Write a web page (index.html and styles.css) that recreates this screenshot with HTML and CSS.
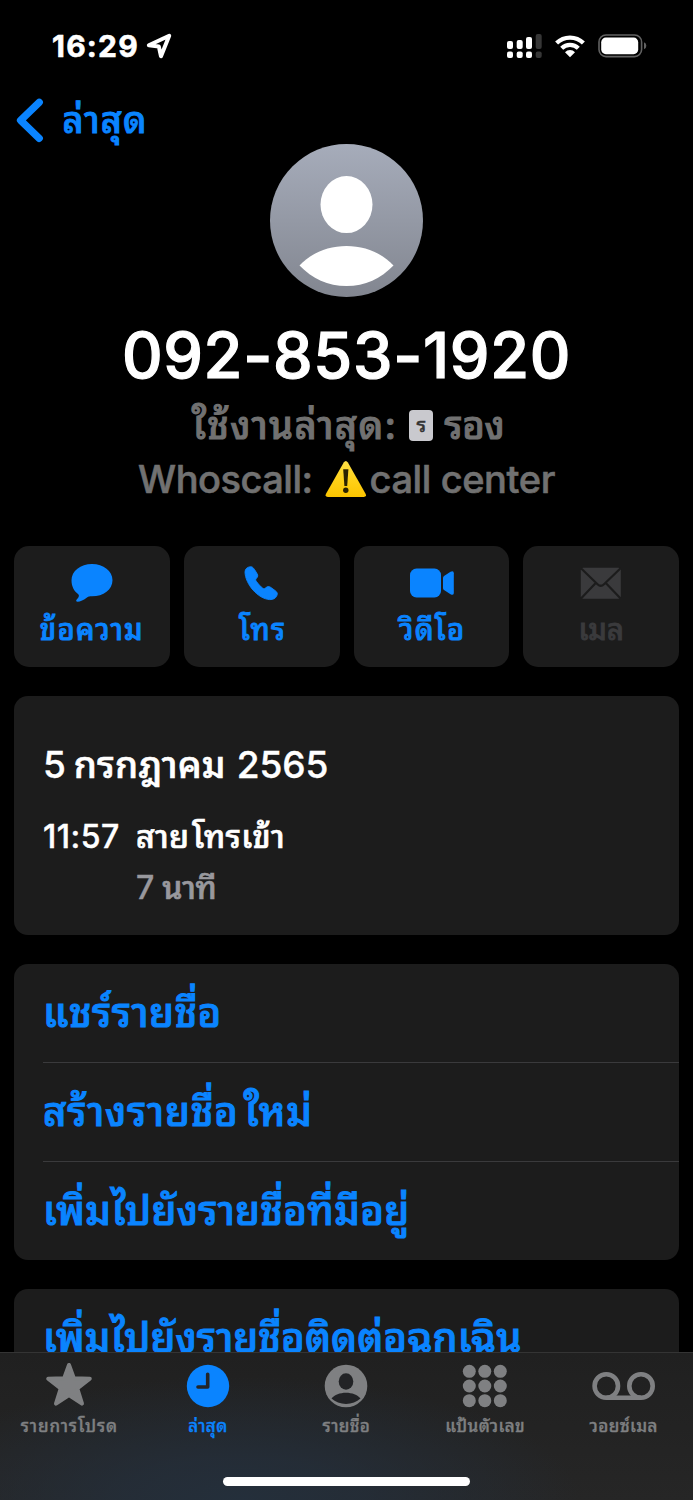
FILE: index.html
```html
<!DOCTYPE html>
<html lang="th">
<head>
<meta charset="utf-8">
<title>ล่าสุด</title>
<link rel="stylesheet" href="styles.css">
</head>
<body>
<div class="screen">
  <header class="status">
    <span class="clock">16:29</span>
    <svg class="locate" width="26" height="26" viewBox="0 0 26 26"><path d="M2.800 12.200 L23.200 2.800 L15 23.200 L12.800 13.400 Z" fill="none" stroke="#fff" stroke-width="4" stroke-linejoin="round"/></svg>
    <svg class="signal" width="35" height="24" viewBox="0 0 35 24">
      <g fill="#fff"><rect x="0" y="7" width="6" height="8" rx="2"/><rect x="9.7" y="6" width="6" height="9" rx="2"/><rect x="19" y="3" width="6" height="12" rx="2"/><rect x="0" y="17.5" width="6" height="6.5" rx="2"/><rect x="9.7" y="17.5" width="6" height="6.5" rx="2"/><rect x="19" y="17.5" width="6" height="6.5" rx="2"/></g>
      <g fill="#363636"><rect x="28.7" y="0" width="6" height="15" rx="2"/><rect x="28.7" y="17.5" width="6" height="6.5" rx="2"/></g>
    </svg>
    <svg class="wifi" width="30" height="23" viewBox="0 0 30 23"><g fill="none" stroke="#fff" stroke-width="4.2"><path d="M1.6 8.1 A19 19 0 0 1 28.4 8.1"/><path d="M6.7 13.3 A11.7 11.7 0 0 1 23.3 13.3"/></g><path d="M10 17.2 A7 7 0 0 1 20 17.2 L15 22.3 Z" fill="#fff"/></svg>
    <svg class="battery" width="49" height="24" viewBox="0 0 49 24"><rect x="1" y="1" width="42.6" height="21.6" rx="7" fill="none" stroke="#626262" stroke-width="1.6"/><rect x="3.2" y="3.6" width="37" height="16.6" rx="4.6" fill="#fff"/><path d="M46 8.3 Q48.3 9 48.3 11.8 Q48.3 14.6 46 15.3 Z" fill="#626262"/></svg>
  </header>

  <main class="content">
    <nav class="back">
      <svg width="28" height="46" viewBox="0 0 28 46"><path d="M23.2 5.3 L4.6 23.300 L23.2 41.300" fill="none" stroke="#0a84ff" stroke-width="7.400" stroke-linecap="round" stroke-linejoin="round"/></svg>
      <span class="back-label">ล่าสุด</span>
    </nav>
    <svg class="avatar" width="153" height="153" viewBox="0 0 153 153">
      <defs><linearGradient id="avatar-fill" x1="0" y1="0" x2="0" y2="1"><stop offset="0" stop-color="#a6acba"/><stop offset="1" stop-color="#828690"/></linearGradient></defs>
      <circle cx="76.5" cy="76.5" r="76.5" fill="url(#avatar-fill)"/>
      <ellipse cx="76.5" cy="60.6" rx="26" ry="28.5" fill="#fff"/>
      <path d="M29.5 121.5 C41 109 58 102 76.5 102 C95 102 112 109 123.5 121.5 C111 134.500 95 142 76.500 142 C58 142 42 134.500 29.500 121.500 Z" fill="#fff"/>
    </svg>
    <h1 class="number">092-853-1920</h1>
    <p class="sub"><span class="t-used">ใช้งานล่าสุด:</span><span class="sim">ร</span><span class="t-rong">รอง</span></p>
    <p class="sub"><span class="t-who">Whoscall:</span><svg class="warning" width="42" height="38" viewBox="0 0 42 38"><defs><linearGradient id="warn-fill" x1="0" y1="0" x2="0" y2="1"><stop offset="0" stop-color="#fde047"/><stop offset=".5" stop-color="#ffd21a"/><stop offset="1" stop-color="#fbc400"/></linearGradient></defs><path d="M18.700 2.600 Q20.800 -.6 22.900 2.600 L40.700 34 Q41.800 37 38.600 37 H3 Q-.2 37 .9 34 Z" fill="url(#warn-fill)"/><path d="M18.200 9.300 H23.400 L22.200 26 H19.400 Z" fill="#2b2200"/><circle cx="20.800" cy="30.300" r="2.700" fill="#2b2200"/></svg><span class="t-call">call center</span></p>

    <section class="actions">
      <div class="action"><svg width="46" height="44" viewBox="0 0 46 44"><path d="M23 4 C34.500 4 43.500 11 43.500 20.200 C43.500 29.500 34.500 36.300 23 36.300 C20.500 36.300 19.500 36.300 18 37.500 C15 40 11 41.800 8.600 41.800 C7 41.800 6.800 40.600 7.700 39.600 C9.300 37.800 10.600 35.700 9.500 34.400 C5 31.300 2.500 26.500 2.500 20.300 C2.500 11 11.500 4 23 4 Z" fill="#0a84ff"/></svg><span class="a-msg">ข้อความ</span></div>
      <div class="action"><svg width="46" height="44" viewBox="0 0 46 44"><path d="M6 12 C6 8.800 8.500 7 11.500 6.700 C13 6.500 14.200 7.600 15.500 9.500 L18 13.600 C19.200 15.500 18.900 16.700 17.500 18.200 C16.300 19.500 16.500 20.200 17.500 21.600 C19.200 24.200 21.200 26.200 23.500 28 C25 29.100 25.800 28.800 27 27.600 C28.600 26.300 29.800 26.200 31.600 27.300 L36.300 30.700 C38.300 32.200 38.700 33.500 37.900 35.500 C36.700 38.500 34 39.700 30.800 39.600 C19 39 6.200 24 6 12 Z" fill="#0a84ff" stroke="#0a84ff" stroke-width=".9" stroke-linejoin="round"/></svg><span class="a-call">โทร</span></div>
      <div class="action"><svg width="46" height="44" viewBox="0 0 46 44"><rect x="2" y="8.500" width="31" height="29" rx="6.500" fill="#0a84ff"/><path d="M35 18 Q35 16.700 36 15.900 L42.500 11.800 Q45.800 10.300 45.800 13.300 V33 Q45.800 35.900 42.500 34.200 L36 30 Q35 29.200 35 27.900 Z" fill="#0a84ff"/></svg><span class="a-vid">วิดีโอ</span></div>
      <div class="action off"><svg width="46" height="44" viewBox="0 0 46 44"><rect x="2.800" y="7.700" width="40" height="31" rx="2.500" fill="#3a3a3c"/><path d="M3 8.200 L19.500 24.200 Q22.800 27.300 26 24.200 L42.600 8.200 M3 38.500 L17.500 23.200 M42.600 38.500 L28 23.200" fill="none" stroke="#1c1c1c" stroke-width="2.200"/></svg><span class="a-mail">เมล</span></div>
    </section>

    <section class="card history">
      <h2 class="date">5 <span class="t-month">กรกฎาคม</span> 2565</h2>
      <div class="entry"><span class="time">11:57</span><span class="t-kind">สาย<span class="in">โทรเข้า</span></span></div>
      <div class="entry muted"><span class="time"></span><span class="t-dur">7 <span class="t-min">นาที</span></span></div>
    </section>

    <section class="card list">
      <div class="row"><span class="r1">แชร์รายชื่อ</span></div>
      <div class="row"><span class="r2">สร้างรายชื่อ<span class="new">ใหม่</span></span></div>
      <div class="row"><span class="r3">เพิ่มไปยังรายชื่อที่มีอยู่</span></div>
    </section>
    <section class="card list">
      <div class="row"><span class="r4">เพิ่มไปยังรายชื่อติดต่อฉุกเฉิน</span></div>
    </section>
  </main>

  <footer class="tabs">
    <div class="tab-row">
      <div class="tab"><svg width="64" height="48" viewBox="0 0 64 48"><path d="M32 5 L36.800 18.200 L52.800 18.700 L40.300 28.500 L45 43.700 L32 35 L19 43.700 L23.700 28.500 L11.200 18.700 L27.200 18.200 Z" fill="#7f8082" stroke="#7f8082" stroke-width="4" stroke-linejoin="round"/></svg><span class="b1">รายการโปรด</span></div>
      <div class="tab on"><svg width="64" height="48" viewBox="0 0 64 48"><circle cx="32" cy="26" r="21.200" fill="#0a84ff"/><path d="M31.700 14.300 V27 H22" fill="none" stroke="#222529" stroke-width="3.600" stroke-linecap="round" stroke-linejoin="round"/></svg><span class="b2">ล่าสุด</span></div>
      <div class="tab"><svg width="64" height="48" viewBox="0 0 64 48"><circle cx="32" cy="26" r="21.300" fill="#7f8082"/><ellipse cx="32" cy="21.500" rx="7.300" ry="8.200" fill="#222326"/><path d="M17.500 38.500 C20.500 34.800 26 32.700 32 32.700 C38 32.700 43.500 34.800 46.500 38.500 C42.800 42 37.500 43.900 32 43.900 C26.500 43.900 21.200 42 17.500 38.500 Z" fill="#222326"/></svg><span class="b3">รายชื่อ</span></div>
      <div class="tab"><svg width="64" height="48" viewBox="0 0 64 48"><g fill="#7f8082"><circle cx="16.300" cy="11.300" r="6.500"/><circle cx="31.800" cy="11.300" r="6.500"/><circle cx="47.300" cy="11.300" r="6.500"/><circle cx="16.300" cy="26" r="6.500"/><circle cx="31.800" cy="26" r="6.500"/><circle cx="47.300" cy="26" r="6.500"/><circle cx="16.300" cy="40.700" r="6.500"/><circle cx="31.800" cy="40.700" r="6.500"/><circle cx="47.300" cy="40.700" r="6.500"/></g></svg><span class="b4">แป้นตัวเลข</span></div>
      <div class="tab"><svg width="64" height="48" viewBox="0 0 64 48"><g fill="none" stroke="#7f8082" stroke-width="4.600"><circle cx="14.300" cy="26" r="11.700"/><circle cx="49" cy="26" r="11.700"/><path d="M14.300 37.700 H49"/></g></svg><span class="b5">วอยซ์เมล</span></div>
    </div>
    <div class="home"></div>
  </footer>
</div>
</body>
</html>
```

FILE: styles.css
```css
* { box-sizing: border-box; margin: 0; padding: 0; }
body { background: #000; }
svg { display: block; flex: none; }
.screen {
  width: 693px; height: 1500px; display: flex; flex-direction: column;
  background: #000; color: #fff; overflow: hidden;
  font-family: Inter, "Noto Sans Thai Looped", "Noto Sans Thai", Sarabun, Loma, sans-serif;
  font-weight: 500; white-space: nowrap;
}
.status { height: 92px; display: flex; align-items: center; padding-left: 52px; flex: none; }
.clock { font-weight: 700; font-size: 30px; line-height: 36px; width: 94px; letter-spacing: 1.2px; -webkit-text-stroke: .6px; }
.signal { margin-left: 335px; }
.wifi { margin-left: 13px; }
.battery { margin-left: 13px; }
.content { flex: 1; min-height: 0; overflow: hidden; }
.back { height: 52px; display: flex; align-items: center; gap: 18px; padding: 4px 0 0 16px; color: #0a84ff; }
.back-label { font-size: 36px; line-height: 46px; letter-spacing: 1.2px; padding-left: .5px; -webkit-text-stroke: 1px; }
.avatar { margin: 0 auto; }
.number { font-size: 63px; line-height: 76px; font-weight: 500; letter-spacing: .7px; text-align: center; margin-top: 20px; -webkit-text-stroke: 1.2px; }
.sub { display: flex; justify-content: center; align-items: center; height: 54px; line-height: 54px; font-size: 38px; color: #717171; }
.number + .sub { margin-top: 5px; }
.t-used { letter-spacing: 1.3px; }
.t-used, .t-rong { -webkit-text-stroke: 1px; }
.t-who { letter-spacing: -.5px; -webkit-text-stroke: .6px; }
.t-call { letter-spacing: -.4px; -webkit-text-stroke: .6px; }
.t-used { padding-left: 3px; }
.t-rong { letter-spacing: -.3px; }
.sim { width: 24px; height: 31px; margin: 0 11px 0 12px; border-radius: 4px; background: #c9c9ce; color: #333; font-size: 20px; line-height: 30px; text-align: center; -webkit-text-stroke: .5px; }
.warning { margin-left: 12px; margin-right: 3px; }
.actions { display: grid; grid-template-columns: repeat(4, 1fr); gap: 14px; margin: 40px 14px 0; }
.action { height: 121px; border-radius: 15px; background: #1c1c1c; color: #0a84ff; display: flex; flex-direction: column; align-items: center; padding-top: 14px; font-size: 29px; line-height: 44px; }
.action span { margin-top: 4px; -webkit-text-stroke: .9px; }
.a-msg { letter-spacing: 1.2px; }
.a-call, .a-vid { letter-spacing: 1.3px; padding-left: 2px; }
.off { color: #3a3a3c; }
.card { margin: 29px 14px 0; border-radius: 14px; background: #1c1c1c; }
.history { height: 239px; padding: 44px 29px 0; }
.date { font-size: 37px; line-height: 50px; font-weight: 500; -webkit-text-stroke: .4px; }
.t-month { margin-left: -2px; margin-right: 1px; letter-spacing: .2px; }
.t-month, .t-kind, .t-min { -webkit-text-stroke: .7px; }
.entry { display: flex; font-size: 32px; line-height: 51px; -webkit-text-stroke: .4px; }
.date + .entry { margin-top: 21px; }
.time { width: 93px; letter-spacing: .5px; }
.t-kind { letter-spacing: .3px; }
.in { margin-left: 3px; }
.t-dur { letter-spacing: -.3px; }
.muted { color: #98989d; }
.list { color: #0a84ff; font-size: 40px; padding-left: 29px; -webkit-text-stroke: 1.1px; }
.r1 { letter-spacing: .5px; }
.r2 { letter-spacing: .8px; }
.new { margin-left: 5px; }
.r3 { letter-spacing: .3px; }
.r4 { letter-spacing: .1px; }
.row { height: 99px; line-height: 98px; border-bottom: 1px solid #3a3a3c; }
.row:last-child { height: 98px; border-bottom: 0; }
.tabs { height: 148px; flex: none; border-top: 1px solid #343434; background: radial-gradient(ellipse 340px 125px at 240px 148px, #242f3b 0, rgba(36,47,60,.75) 35%, rgba(36,47,60,0) 100%), linear-gradient(#202020, #262626); color: #7f8082; }
.tab-row { display: grid; grid-template-columns: repeat(5, 138.6px); padding-top: 7px; }
.tab { display: flex; flex-direction: column; align-items: center; font-size: 17px; line-height: 24px; }
.tab span { margin-top: 6px; -webkit-text-stroke: .4px; letter-spacing: .4px; }
.tab .b1 { letter-spacing: .9px; }
.on { color: #0a84ff; }
.home { width: 247px; height: 9px; border-radius: 5px; background: #fff; margin: 39px auto 0; }
```
